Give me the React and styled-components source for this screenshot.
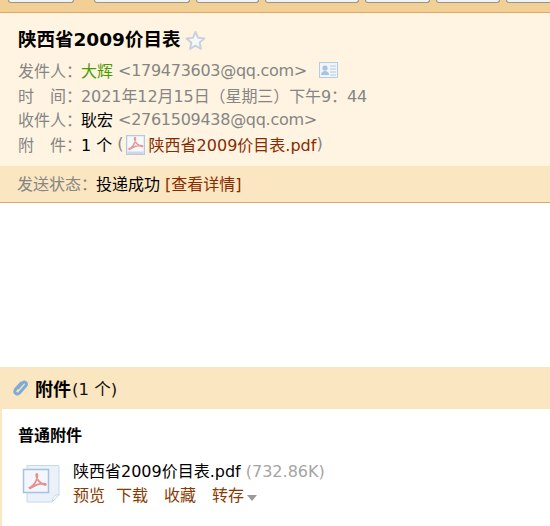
import React from 'react'
import styled, { createGlobalStyle } from 'styled-components'

const GlobalStyle = createGlobalStyle`
    html, body {
        margin: 0;
        padding: 0;
        background: #fff;
    }
    body {
        width: 550px;
        height: 526px;
        overflow: hidden;
        font-family: "DejaVu Sans", "Noto Sans CJK SC", sans-serif;
        font-size: 16px;
        color: #000;
    }
`

function StarIcon() {
    return (
        <svg width="21" height="21" viewBox="0 0 22 22">
            <path d="M11 2l2.700 6.100 6.600.7-5 4.400 1.400 6.500L11 16.400l-5.700 3.400 1.400-6.500-5-4.400 6.600-.7z" fill="#f6f7f9" stroke="#c9d0dc" strokeWidth="2" strokeLinejoin="round" />
        </svg>
    )
}

function CardIcon() {
    return (
        <svg width="19" height="16" viewBox="0 0 19 16">
            <rect x="0.500" y="0.500" width="18" height="15" fill="#f2f5f7" stroke="#b4cbe2" />
            <circle cx="6" cy="6" r="2.600" fill="#a6c4e2" />
            <path d="M2 13c0-3 2-4 4-4s4 1 4 4z" fill="#a6c4e2" />
            <path d="M11 4h6M11 7h6M11 10h6M11 13h6" stroke="#b4cbe2" />
        </svg>
    )
}

function AcrobatMark({ color }) {
    return (
        <path
            d="M3 14c3-1 6-5 6.500-10 .2-2-1-2-1-.5 0 3 3 7 7 8 1.500.4 1.500-1 0-1-4-.3-8 1-12 4z"
            fill="none"
            stroke={color}
            strokeWidth="1.500"
        />
    )
}

function PdfSmallIcon() {
    return (
        <svg width="19" height="20" viewBox="0 0 19 20">
            <rect x="0.500" y="0.500" width="18" height="19" fill="#f8f8f8" stroke="#b5c9e2" strokeWidth="1.500" />
            <rect x="1.500" y="16.500" width="16" height="2.500" fill="#c9d8ea" />
            <AcrobatMark color="#e69a9a" />
        </svg>
    )
}

function PdfLargeIcon() {
    return (
        <svg width="38" height="42" viewBox="0 0 38 42">
            <path d="M5 2.500h32v29l-7 7.500H5z" fill="#eaf1f9" stroke="#c6d8ec" />
            <path d="M30 39c1-5 2-7 7-7.500z" fill="#fff" stroke="#c6d8ec" />
            <rect x="1.500" y="6.500" width="25" height="23" fill="#f3f6fb" stroke="#a9c0de" strokeWidth="1.500" />
            <g transform="translate(4 8) scale(1.200)">
                <AcrobatMark color="#e58f8f" />
            </g>
        </svg>
    )
}

function ClipIcon() {
    return (
        <svg width="18" height="18" viewBox="0 0 17 18">
            <path
                d="M5.500 9l4.500-5c2-2 5-.3 3.500 2.500L7 14c-2 2-5.500.5-4.500-2.500.2-.7.6-1.300 1-1.800l5-5.500"
                fill="none"
                stroke="#7fabd6"
                strokeWidth="3"
                strokeLinecap="round"
            />
        </svg>
    )
}

const tabs = [
    { left: 8, width: 66 },
    { left: 20, width: 96 },
    { left: 6, width: 63 },
    { left: 6, width: 94 },
    { left: 6, width: 65 },
    { left: 6, width: 64 },
    { left: 6, width: 64 },
    { left: 6, width: 64 },
]

function App() {
    return (
        <>
            <GlobalStyle />
            <TabBar>
                {tabs.map((tab, i) => (
                    <Tab key={i} $left={tab.left} $width={tab.width} />
                ))}
            </TabBar>

            <Header>
                <Title>
                    陕西省2009价目表
                    <StarIcon />
                </Title>
                <Row>
                    <Label>发件人：</Label>
                    <SenderName>大辉</SenderName>
                    <Address>&lt;179473603@qq.com&gt;</Address>
                    <CardSlot><CardIcon /></CardSlot>
                </Row>
                <Row>
                    <Label>时　间：</Label>
                    <DateText>2021年12月15日（星期三）下午9：44</DateText>
                </Row>
                <Row>
                    <Label>收件人：</Label>
                    <Name>耿宏</Name>
                    <Address>&lt;2761509438@qq.com&gt;</Address>
                </Row>
                <Row>
                    <Label>附　件：</Label>
                    <Name>1 个</Name>
                    <Muted>&nbsp;(</Muted>
                    <InlineIcon><PdfSmallIcon /></InlineIcon>
                    <FileLink>陕西省2009价目表.pdf</FileLink>
                    <Muted>)</Muted>
                </Row>
            </Header>

            <StatusBar>
                <StatusLabel>发送状态：</StatusLabel>
                <Name>投递成功</Name>
                <DetailLink>[查看详情]</DetailLink>
            </StatusBar>

            <Body />

            <AttachHead>
                <ClipIcon />
                <strong>附件</strong>
                <span>(1 个)</span>
            </AttachHead>

            <AttachBody>
                <GroupTitle>普通附件</GroupTitle>
                <AttachItem>
                    <PdfLargeIcon />
                    <AttachInfo>
                        <div>
                            <span>陕西省2009价目表.pdf</span>
                            <FileSize>(732.86K)</FileSize>
                        </div>
                        <Actions>
                            <Action $gap={11}>预览</Action>
                            <Action $gap={16}>下载</Action>
                            <Action $gap={16}>收藏</Action>
                            <Action>转存<Caret /></Action>
                        </Actions>
                    </AttachInfo>
                </AttachItem>
            </AttachBody>
        </>
    )
}

const TabBar = styled.div`
    display: flex;
    height: 12px;
    overflow: hidden;
    background: #f2d095;
    border-bottom: 1px solid #e0a868;
`

const Tab = styled.div`
    flex: none;
    box-sizing: border-box;
    height: 3px;
    width: ${({ $width }) => $width}px;
    margin-left: ${({ $left }) => $left}px;
    background: #f4f2ee;
    border: 1px solid #949494;
    border-top: 0;
    border-radius: 0 0 4px 4px;
`

const Header = styled.div`
    height: 153px;
    box-sizing: border-box;
    padding: 15px 18px 0;
    background: #fff4e1;
`

const Title = styled.h1`
    display: flex;
    align-items: center;
    gap: 4px;
    margin: 0 0 6px;
    height: 24px;
    font-size: 18.500px;
    font-weight: bold;
    line-height: 24px;
`

const Row = styled.div`
    display: flex;
    align-items: center;
    height: 24.500px;
    white-space: nowrap;
    font-size: 16px;
`

const Label = styled.span`
    color: #858585;
    width: 63px;
    flex: none;
`

const StatusLabel = styled.span`
    color: #858585;
    width: 79px;
    flex: none;
    white-space: nowrap;
`

const Muted = styled.span`
    color: #858585;
`

const DateText = styled.span`
    color: #858585;
    letter-spacing: -0.080px;
`

const Name = styled.span`
    color: #000;
`

const SenderName = styled.span`
    color: #4a9a00;
`

const Address = styled.span`
    color: #858585;
    margin-left: 5px;
    letter-spacing: -0.280px;
`

const CardSlot = styled.span`
    display: flex;
    margin-left: 12px;
`

const InlineIcon = styled.span`
    display: flex;
    margin: 2px 4px 0 2px;
`

const FileLink = styled.span`
    color: #8a2a00;
`

const StatusBar = styled.div`
    display: flex;
    align-items: center;
    height: 37px;
    padding: 0 0 2px 17px;
    box-sizing: border-box;
    background: #fae6c1;
    border-bottom: 1px solid #e0a868;
    font-size: 16px;
`

const DetailLink = styled.span`
    color: #8a2a00;
    margin-left: 5px;
`

const Body = styled.div`
    height: 164px;
    background: #fff;
`

const AttachHead = styled.div`
    display: flex;
    align-items: center;
    gap: 5px;
    height: 42px;
    padding-left: 12px;
    background: #fae6c1;
    font-size: 16px;

    strong {
        font-size: 18px;
    }

    span {
        margin-left: -4px;
        color: #111;
        font-size: 16.500px;
    }
`

const AttachBody = styled.div`
    height: 117px;
    box-sizing: border-box;
    padding: 16px 16px 0;
    border-left: 2px solid #fae6c1;
`

const GroupTitle = styled.div`
    font-size: 16px;
    font-weight: bold;
    line-height: 22px;
`

const AttachItem = styled.div`
    display: flex;
    gap: 14px;
    margin-top: 13px;
    margin-left: 4px;

    svg {
        margin-top: 3px;
    }
`

const AttachInfo = styled.div`
    font-size: 16px;
    line-height: 24px;
    margin-left: -1px;
`

const FileSize = styled.span`
    color: #a5a5a5;
    margin-left: 5px;
`

const Actions = styled.div`
    display: flex;
`

const Action = styled.span`
    color: #8a3a00;
    display: flex;
    align-items: center;
    margin-right: ${({ $gap }) => $gap || 0}px;
`

const Caret = styled.i`
    width: 0;
    height: 0;
    margin-left: 3px;
    margin-top: 3px;
    border-left: 5px solid transparent;
    border-right: 5px solid transparent;
    border-top: 6px solid #9a9a9a;
`

export default App
